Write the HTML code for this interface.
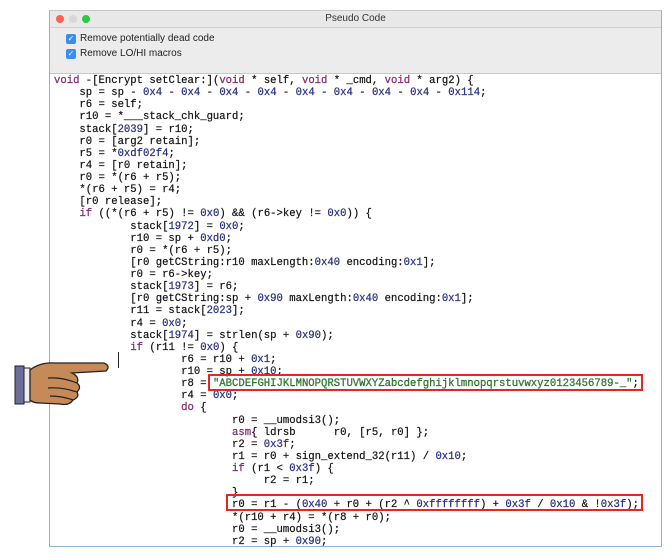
<!DOCTYPE html>
<html><head><meta charset="utf-8"><style>
html,body{margin:0;padding:0;background:#fff;width:672px;height:560px;overflow:hidden;position:relative}
.win{position:absolute;left:49px;top:10px;width:611px;height:535px;border:1px solid #8fb3d9;border-top:1px solid #c9c9c9;background:#fff}
.title{position:absolute;left:0;top:0;right:0;height:16px;background:#e8e8e8;border-bottom:1px solid #d0d0d0;font:10px "Liberation Sans",sans-serif;color:#333;text-align:center;line-height:16px}
.dot{position:absolute;top:4px;width:8px;height:8px;border-radius:50%}
.opts{position:absolute;left:0;top:17px;right:0;height:45px;background:#ececec;border-bottom:1px solid #c8c8c8;font:10px "Liberation Sans",sans-serif;color:#222}
.cb{position:absolute;left:16px;width:10px;height:10px;background:#3b8ef0;border-radius:2px;color:#fff;font-size:8px;line-height:10px;text-align:center}
.lbl{position:absolute;left:30px}
pre{position:absolute;left:54px;top:75px;margin:0;font:10.6px/12.13px "Liberation Mono",monospace;color:#111;letter-spacing:0;-webkit-text-stroke:0.2px #111}
.k{color:#c02c9a}.n{color:#2b36b5}.s{color:#2aa32a}
.box{position:absolute;border:2px solid #e8261f}
</style></head><body>
<div class="win">
 <div class="title">Pseudo Code
  <div class="dot" style="left:6px;background:#fc5f57"></div>
  <div class="dot" style="left:19px;background:#d8d8d8"></div>
  <div class="dot" style="left:32px;background:#2ac840"></div>
 </div>
 <div class="opts">
  <div class="cb" style="top:6px">✓</div><div class="lbl" style="top:5px">Remove potentially dead code</div>
  <div class="cb" style="top:21px">✓</div><div class="lbl" style="top:20px">Remove LO/HI macros</div>
 </div>
</div>
<pre><span class="k">void</span> -[Encrypt setClear:](<span class="k">void</span> * self, <span class="k">void</span> * _cmd, <span class="k">void</span> * arg2) {
    sp = sp - <span class="n">0x4</span> - <span class="n">0x4</span> - <span class="n">0x4</span> - <span class="n">0x4</span> - <span class="n">0x4</span> - <span class="n">0x4</span> - <span class="n">0x4</span> - <span class="n">0x4</span> - <span class="n">0x114</span>;
    r6 = self;
    r10 = *___stack_chk_guard;
    stack[<span class="n">2039</span>] = r10;
    r0 = [arg2 retain];
    r5 = *<span class="n">0xdf02f4</span>;
    r4 = [r0 retain];
    r0 = *(r6 + r5);
    *(r6 + r5) = r4;
    [r0 release];
    <span class="k">if</span> ((*(r6 + r5) != <span class="n">0x0</span>) &amp;&amp; (r6-&gt;key != <span class="n">0x0</span>)) {
            stack[<span class="n">1972</span>] = <span class="n">0x0</span>;
            r10 = sp + <span class="n">0xd0</span>;
            r0 = *(r6 + r5);
            [r0 getCString:r10 maxLength:<span class="n">0x40</span> encoding:<span class="n">0x1</span>];
            r0 = r6-&gt;key;
            stack[<span class="n">1973</span>] = r6;
            [r0 getCString:sp + <span class="n">0x90</span> maxLength:<span class="n">0x40</span> encoding:<span class="n">0x1</span>];
            r11 = stack[<span class="n">2023</span>];
            r4 = <span class="n">0x0</span>;
            stack[<span class="n">1974</span>] = strlen(sp + <span class="n">0x90</span>);
            <span class="k">if</span> (r11 != <span class="n">0x0</span>) {
                    r6 = r10 + <span class="n">0x1</span>;
                    r10 = sp + <span class="n">0x10</span>;
                    r8 = <span class="s">"ABCDEFGHIJKLMNOPQRSTUVWXYZabcdefghijklmnopqrstuvwxyz0123456789-_"</span>;
                    r4 = <span class="n">0x0</span>;
                    <span class="k">do</span> {
                            r0 = __umodsi3();
                            <span class="k">asm</span>{ ldrsb      r0, [r5, r0] };
                            r2 = <span class="n">0x3f</span>;
                            r1 = r0 + sign_extend_32(r11) / <span class="n">0x10</span>;
                            <span class="k">if</span> (r1 &lt; <span class="n">0x3f</span>) {
                                 r2 = r1;
                            }
                            r0 = r1 - (<span class="n">0x40</span> + r0 + (r2 ^ <span class="n">0xffffffff</span>) + <span class="n">0x3f</span> / <span class="n">0x10</span> &amp; !<span class="n">0x3f</span>);
                            *(r10 + r4) = *(r8 + r0);
                            r0 = __umodsi3();
                            r2 = sp + <span class="n">0x90</span>;</pre>
<div class="box" style="left:208px;top:374px;width:431px;height:13px"></div>
<div class="box" style="left:226px;top:494px;width:413px;height:13px"></div>
<div style="position:absolute;left:118px;top:352px;width:1px;height:16px;background:#222"></div>
<svg style="position:absolute;left:0;top:350px" width="120" height="62" viewBox="0 0 120 62">
 <rect x="15" y="16" width="9" height="38" fill="#6a6e98" stroke="#222" stroke-width="1"/>
 <rect x="24" y="18" width="6" height="34" fill="#eee" stroke="#222" stroke-width="1"/>
 <path d="M30 20 Q40 12 55 13 L104 13 Q111 16 106 21 L72 23 Q80 27 77 33 Q82 37 77 42 Q80 47 73 50 Q69 56 60 54 L40 53 Q33 53 30 50 Z" fill="#c58a57" stroke="#222" stroke-width="1.3"/>
 <path d="M48 28 Q62 27 77 33 M48 38 Q62 37 77 42 M50 46 Q62 46 73 50" fill="none" stroke="#222" stroke-width="1.2"/>
</svg>
</body></html>
